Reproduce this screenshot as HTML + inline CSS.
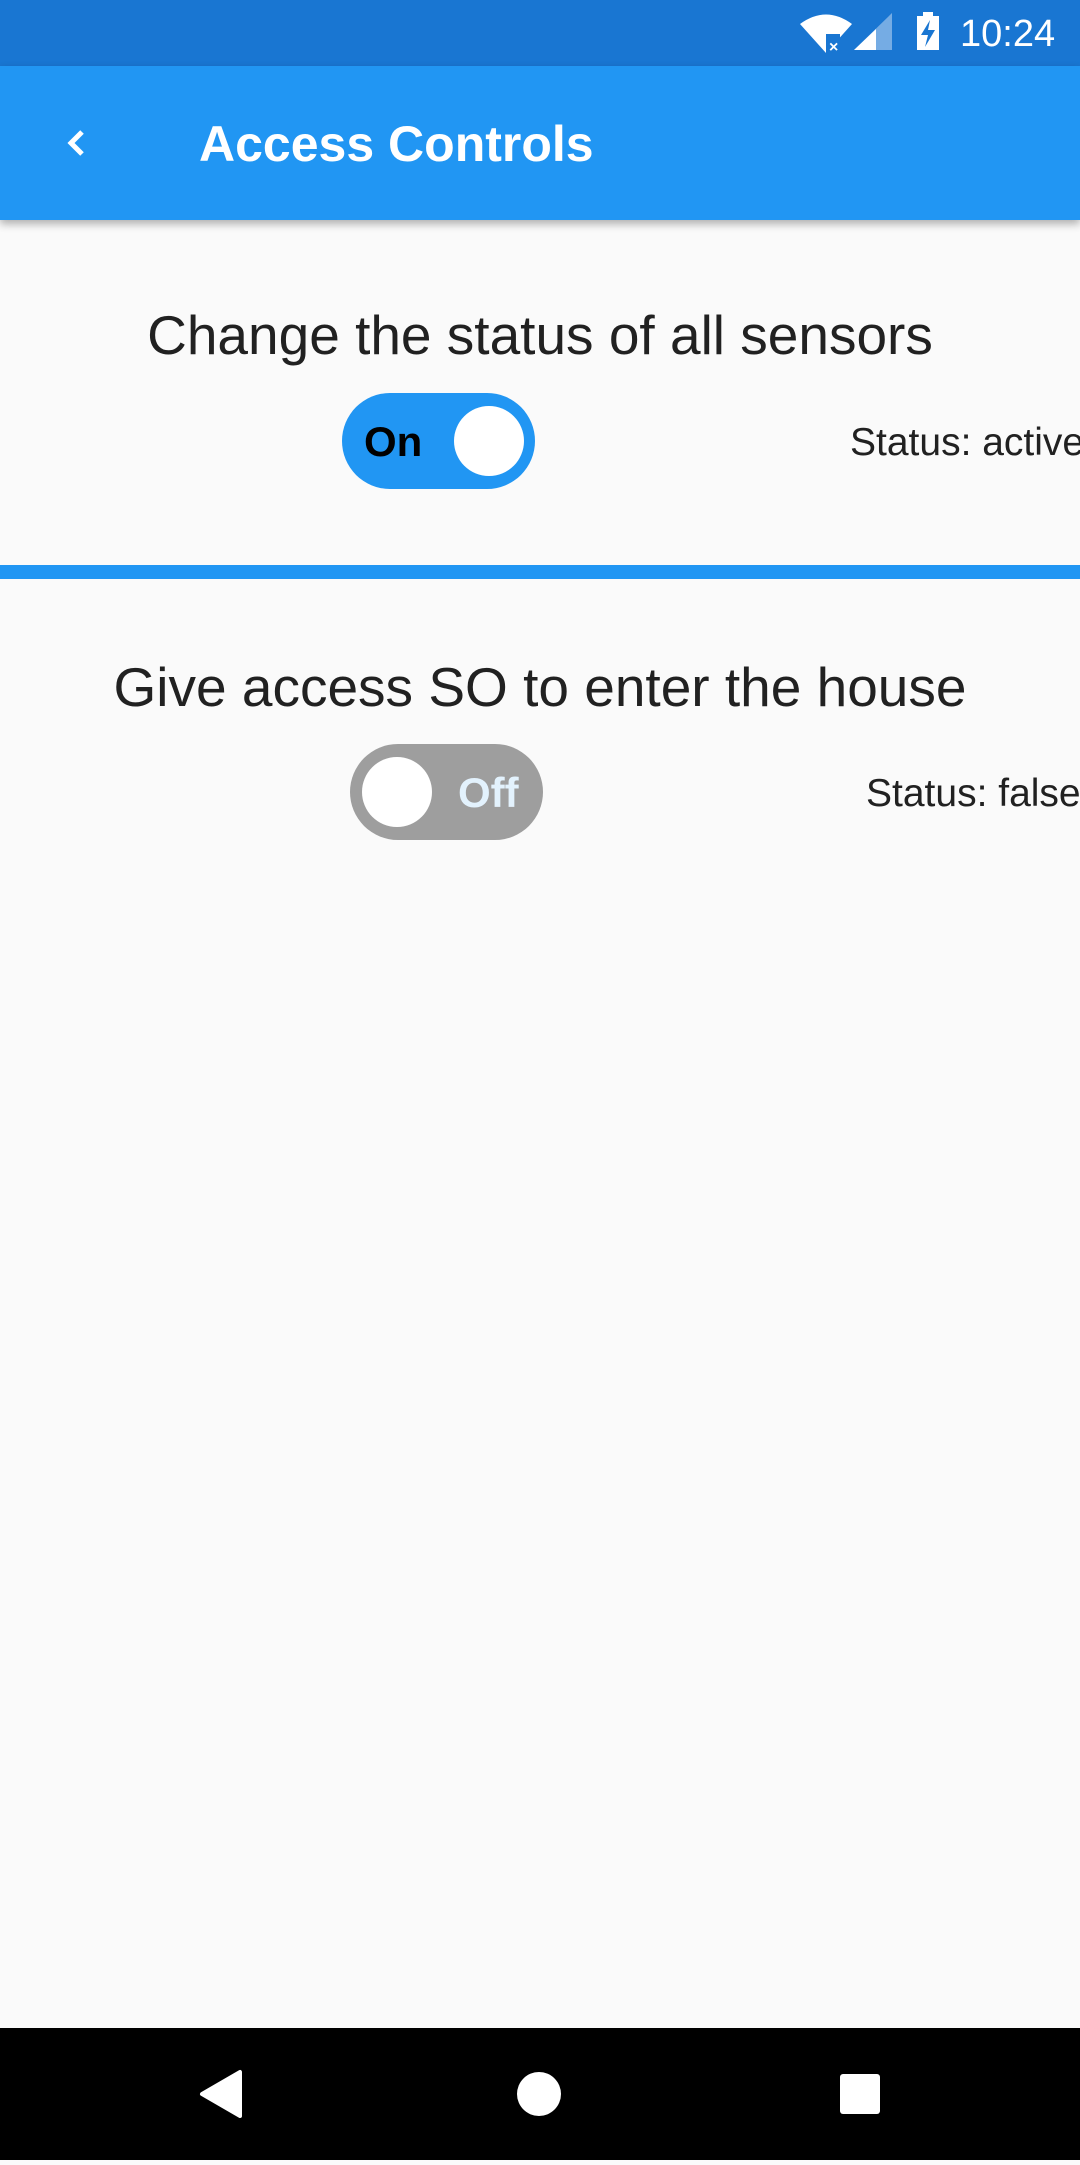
<!DOCTYPE html>
<html><head><meta charset="utf-8"><style>
body{margin:0;width:1080px;height:2160px;background:#fafafa;font-family:"Liberation Sans",Roboto,sans-serif;position:relative;overflow:hidden}
.sb{position:absolute;left:0;top:0;width:1080px;height:66px;background:#1976d2}
.ab{position:absolute;left:0;top:66px;width:1080px;height:154px;background:#2196f3;box-shadow:0 4px 8px rgba(0,0,0,.3)}
.t{position:absolute;white-space:nowrap}
.tog{position:absolute;width:193px;height:96px;border-radius:48px}
.knob{position:absolute;top:13px;width:70px;height:70px;border-radius:50%;background:#fff}
.nav{position:absolute;left:0;top:2028px;width:1080px;height:132px;background:#000}
</style></head><body>
<div class="sb">
<svg width="1080" height="66" style="position:absolute;left:0;top:0">
<path d="M800 24 Q826 5 852 24 L826 53 Z" fill="#fff"/>
<rect x="826" y="34" width="14" height="20" fill="#1976d2"/>
<text x="829" y="52" font-size="16" font-weight="bold" fill="#fff" font-family="Liberation Sans">×</text>
<path d="M854 50 L892 13 L892 50 Z" fill="#fff" opacity=".4"/>
<path d="M854 50 L876 29 L876 50 Z" fill="#fff"/>
<rect x="917" y="16" width="22" height="34" fill="#fff"/><rect x="923" y="12" width="10" height="5" fill="#fff"/>
<path d="M930 20 L921 35 L928 35 L925 47 L935 30 L928 30 Z" fill="#1976d2"/>
<text x="960" y="46" font-size="38" fill="#fff" font-family="Liberation Sans">10:24</text>
</svg></div>
<div class="ab">
<svg width="40" height="40" style="position:absolute;left:58px;top:58px"><path d="M24 8 L13 19 L24 30" stroke="#fff" stroke-width="5" fill="none"/></svg>
<div class="t" style="left:199px;top:49px;font-size:50px;font-weight:bold;color:#fff">Access Controls</div>
</div>
<div class="t" style="left:0;width:1080px;text-align:center;top:303px;font-size:55px;color:#212121">Change the status of all sensors</div>
<div class="tog" style="left:342px;top:393px;background:#2196f3"><div class="knob" style="left:112px"></div>
<div class="t" style="left:22px;top:25px;font-size:42px;font-weight:bold;color:#000">On</div></div>
<div class="t" style="left:850px;top:421px;font-size:39px;color:#212121">Status: active</div>
<div style="position:absolute;left:0;top:565px;width:1080px;height:14px;background:#2196f3"></div>
<div class="t" style="left:0;width:1080px;text-align:center;top:655px;font-size:55px;color:#212121">Give access SO to enter the house</div>
<div class="tog" style="left:350px;top:744px;background:#9e9e9e"><div class="knob" style="left:12px"></div>
<div class="t" style="left:108px;top:25px;font-size:42px;font-weight:bold;color:#e3f2fd">Off</div></div>
<div class="t" style="left:866px;top:772px;font-size:39px;color:#212121">Status: false</div>
<div class="nav"><svg width="1080" height="132">
<path d="M240 44 L240 88 L202 66 Z" fill="#fff" stroke="#fff" stroke-width="4" stroke-linejoin="round"/>
<circle cx="539" cy="66" r="22" fill="#fff"/>
<rect x="840" y="46" width="40" height="40" rx="3" fill="#fff"/>
</svg></div>
</body></html>
